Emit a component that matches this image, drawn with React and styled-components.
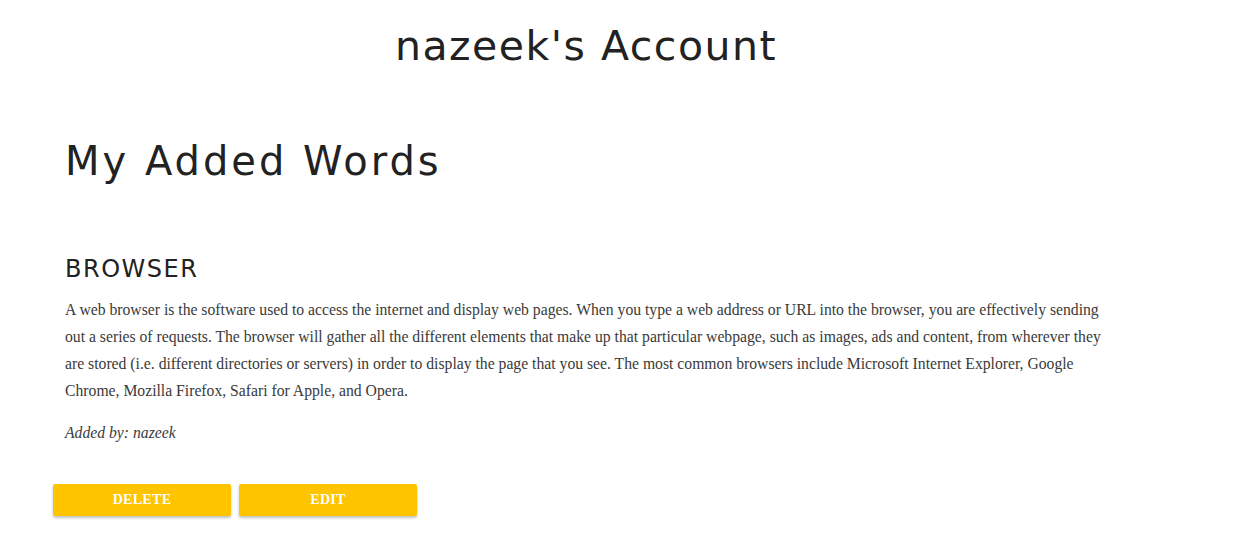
import React from "react";
import styled, { createGlobalStyle } from "styled-components";

const GlobalStyle = createGlobalStyle`
  html, body {
    margin: 0;
    padding: 0;
    background: #fff;
  }
`;

const Page = styled.div`
  width: 1249px;
  min-height: 535px;
  box-sizing: border-box;
`;

const Header = styled.h1`
  margin: 0;
  padding: 20px 77px 0 0;
  text-align: center;
  font-family: "DejaVu Sans", sans-serif;
  font-weight: 400;
  font-size: 41px;
  letter-spacing: 1.5px;
  line-height: 52px;
  color: #222;
`;

const Section = styled.section`
  padding: 0 0 0 65px;
`;

const SectionTitle = styled.h2`
  margin: 66px 0 0;
  font-family: "DejaVu Sans", sans-serif;
  font-weight: 400;
  font-size: 40px;
  letter-spacing: 3px;
  line-height: 46px;
  color: #222;
`;

const Word = styled.article`
  margin-top: 70px;
  width: 1040px;
`;

const WordTitle = styled.h3`
  margin: 0;
  font-family: "DejaVu Sans", sans-serif;
  font-weight: 400;
  font-size: 24px;
  letter-spacing: 1.5px;
  line-height: 30px;
  color: #222;
`;

const Definition = styled.p`
  margin: 12px 0 0;
  font-family: "Liberation Serif", serif;
  font-size: 15.7px;
  line-height: 27px;
  color: #3a3a3a;
`;

const Author = styled.p`
  margin: 19px 0 0;
  font-family: "Liberation Serif", serif;
  font-style: italic;
  font-size: 15.7px;
  line-height: 20px;
  color: #3a3a3a;
`;

const Actions = styled.div`
  display: flex;
  gap: 8px;
  margin: 41px 0 0 -12px;
`;

const Button = styled.button`
  width: 178px;
  height: 32px;
  border: none;
  border-radius: 2px;
  background: #ffc400;
  color: #fff;
  font-family: "Liberation Serif", serif;
  font-size: 14px;
  font-weight: 700;
  letter-spacing: 0.3px;
  text-transform: uppercase;
  box-shadow: 0 2px 3px rgba(0, 0, 0, 0.25);
  cursor: pointer;
`;

export default function App() {
  return (
    <Page>
      <GlobalStyle />
      <Header>nazeek's Account</Header>
      <Section>
        <SectionTitle>My Added Words</SectionTitle>
        <Word>
          <WordTitle>BROWSER</WordTitle>
          <Definition>
            A web browser is the software used to access the internet and display web pages. When you type a web
            address or URL into the browser, you are effectively sending out a series of requests. The browser will
            gather all the different elements that make up that particular webpage, such as images, ads and content,
            from wherever they are stored (i.e. different directories or servers) in order to display the page that you
            see. The most common browsers include Microsoft Internet Explorer, Google Chrome, Mozilla Firefox, Safari
            for Apple, and Opera.
          </Definition>
          <Author>Added by: nazeek</Author>
          <Actions>
            <Button>Delete</Button>
            <Button>Edit</Button>
          </Actions>
        </Word>
      </Section>
    </Page>
  );
}
